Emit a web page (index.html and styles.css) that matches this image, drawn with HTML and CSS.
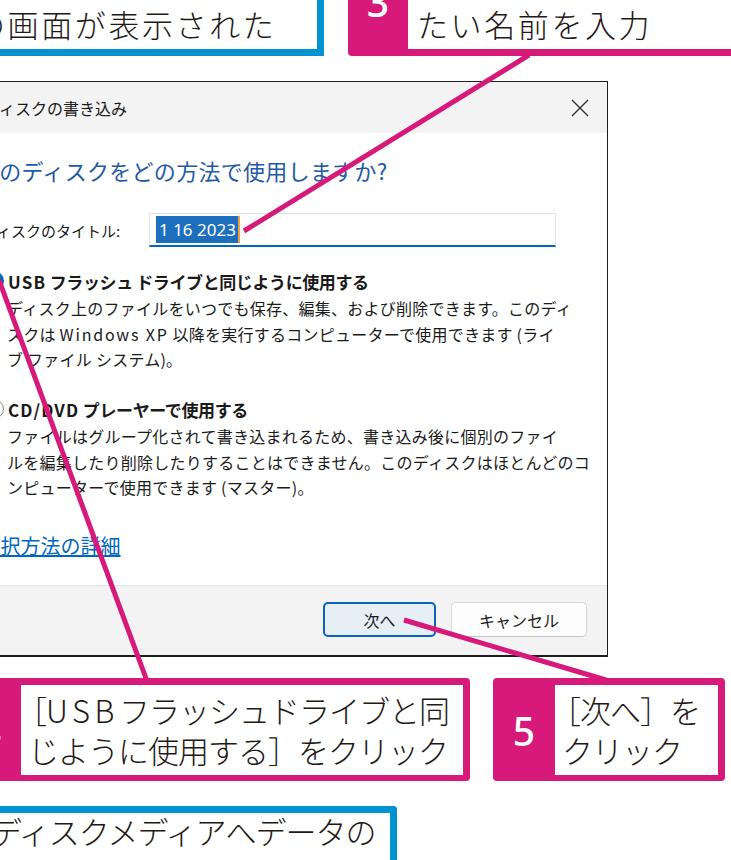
FILE: index.html
```html
<!DOCTYPE html>
<html lang="ja">
<head>
<meta charset="utf-8">
<title>ディスクの書き込み</title>
<link rel="stylesheet" href="styles.css">
</head>
<body>
<div class="top-row">
  <div class="note note-blue top-blue"><p>の画面が表示された</p></div>
  <div class="note callout top-pink">
    <div class="badge badge-top"><span class="num">3</span></div>
    <div class="callout-body top-body"><p>たい名前を入力</p></div>
  </div>
</div>

<div class="frame">
  <div class="window">
    <div class="titlebar">
      <span class="title">ディスクの書き込み</span>
      <svg class="close" width="18" height="18" viewBox="0 0 18 18"><path d="M1 1 L17 17 M17 1 L1 17" stroke="#2b2b2b" stroke-width="1.3" fill="none"/></svg>
    </div>
    <div class="content">
      <div class="heading">このディスクをどの方法で使用しますか?</div>
      <div class="title-row">
        <span class="label">ディスクのタイトル:</span>
        <div class="input"><span class="sel">1 16 2023</span><span class="caret"></span></div>
      </div>
      <div class="option first">
        <div class="opt-head"><span class="radio"></span><span><span class="lat">USB</span> フラッシュ ドライブと同じように使用する</span></div>
        <div class="opt-desc">ディスク上のファイルをいつでも保存、編集、および削除できます。このディ<br>スクは <span class="lat">Windows XP</span> 以降を実行するコンピューターで使用できます (ライ<br>ブ ファイル システム)。</div>
      </div>
      <div class="option second">
        <div class="opt-head"><span class="radio off"></span><span><span class="lat">CD/DVD</span> プレーヤーで使用する</span></div>
        <div class="opt-desc">ファイルはグループ化されて書き込まれるため、書き込み後に個別のファイ<br>ルを編集したり削除したりすることはできません。このディスクはほとんどのコ<br>ンピューターで使用できます (マスター)。</div>
      </div>
      <a class="link" href="#">選択方法の詳細</a>
    </div>
    <div class="footer">
      <button class="btn btn-next">次へ</button>
      <button class="btn btn-cancel">キャンセル</button>
    </div>
  </div>
</div>

<div class="bottom-row">
  <div class="note callout c4">
    <div class="badge"><span class="num">4</span></div>
    <div class="callout-body"><p><span class="lb">［</span><span class="usb">USB</span>フラッシュドライブと同<br>じように使用する］をクリック</p></div>
  </div>
  <div class="note callout c5">
    <div class="badge"><span class="num">5</span></div>
    <div class="callout-body"><p><span class="lb">［</span>次へ］を<br>クリック</p></div>
  </div>
</div>

<div class="note note-blue bottom-blue"><p>ディスクメディアへデータの</p></div>

<svg class="leaders" width="731" height="860" viewBox="0 0 731 860">
  <g stroke="#d7197a" stroke-width="5" fill="none">
    <line x1="529" y1="55" x2="244" y2="231"/>
    <line x1="-1" y1="280" x2="147" y2="681"/>
    <line x1="404" y1="620" x2="606" y2="680"/>
  </g>
</svg>
</body>
</html>
```

FILE: styles.css
```css
* { box-sizing: border-box; }
html, body { margin: 0; padding: 0; }
body {
  width: 731px;
  height: 860px;
  overflow: hidden;
  position: relative;
  background: #fff;
  font-family: "Noto Sans CJK JP", "Noto Sans", sans-serif;
  color: #1a1a1a;
}

/* ---------- callouts ---------- */
.note {
  font-family: "Noto Sans CJK JP", "Noto Sans", sans-serif;
  font-weight: 300;
  font-size: 31px;
  color: #231815;
}
.note p { margin: 0; white-space: nowrap; }

.top-row { display: flex; height: 56px; }
.top-row > * { flex-shrink: 0; }

.top-blue {
  margin-left: -40px;
  width: 364px;
  height: 56px;
  background: #fff;
  border-right: 7px solid #0093cf;
  border-bottom: 7px solid #0093cf;
  padding: 4px 0 0 14px;
  line-height: 40px;
  letter-spacing: 2.6px;
}

.callout {
  display: flex;
  background: #d7197a;
  border-radius: 4px;
}
.badge {
  flex: 0 0 62px;
  display: flex;
  align-items: center;
  justify-content: center;
}
.num {
  font-family: "Noto Sans", "Noto Sans CJK JP", sans-serif;
  font-weight: 500;
  font-size: 39px;
  line-height: 39px;
  color: #fff;
}
.callout-body {
  flex: 1;
  background: #fff;
  line-height: 40px;
  padding: 5px 0 0 7px;
  letter-spacing: -1px;
}
.lb { margin-left: -12px; }
.usb { letter-spacing: 4.5px; }

.top-pink {
  margin-left: 24px;
  width: 420px;
  height: 56px;
  padding: 0 0 7px 0;
  border-radius: 0 0 0 4px;
}
.badge-top {
  flex: 0 0 60px;
  align-items: flex-start;
}
.badge-top .num { margin-top: -18px; }
.top-body {
  padding: 4px 0 0 9px;
  letter-spacing: 2.6px;
}

/* ---------- dialog ---------- */
.frame {
  margin-top: 25px;
  margin-left: -40px;
  width: 648px;
  height: 576px;
  border: 1px solid #1e1e1e;
  border-bottom-width: 2px;
  background: #fafafa;
}
.window {
  height: 100%;
  display: flex;
  flex-direction: column;
  border-radius: 0 8px 8px 0;
  overflow: hidden;
  background: #fff;
}
.titlebar {
  flex: 0 0 51px;
  background: #f3f3f3;
  display: flex;
  align-items: center;
  justify-content: space-between;
  padding: 0 18px 0 23px;
}
.title { font-size: 16px; color: #1a1a1a; }
.close { display: block; }

.content {
  flex: 1;
  padding: 22px 0 0 16px;
  display: flex;
  flex-direction: column;
  align-items: flex-start;
}
.heading {
  font-size: 22px;
  line-height: 30px;
  letter-spacing: 0.3px;
  color: #1f5aa6;
  white-space: nowrap;
}
.title-row {
  margin-top: 28px;
  display: flex;
  align-items: center;
  height: 34px;
}
.label {
  margin-left: 5px;
  width: 167px;
  font-size: 15px;
  white-space: nowrap;
}
.input {
  width: 407px;
  height: 34px;
  border: 1px solid #e2e2e2;
  border-bottom: 2px solid #0067c0;
  background: #fff;
  display: flex;
  align-items: center;
  padding-left: 6px;
}
.sel {
  display: inline-block;
  width: 82px;
  height: 27px;
  background: #1d6fbd;
  color: #fff;
  font-family: "Noto Sans", sans-serif;
  font-size: 17px;
  line-height: 27px;
  padding-left: 3px;
  white-space: nowrap;
}
.caret {
  display: inline-block;
  width: 2px;
  height: 27px;
  background: #eea14d;
}

.option.first { margin-top: 22px; }
.option.second { margin-top: 24.5px; }
.opt-head {
  display: flex;
  align-items: center;
  height: 24px;
  gap: 4px;
  font-size: 17px;
  font-weight: 700;
  letter-spacing: -0.4px;
  white-space: nowrap;
}
.opt-head .lat { letter-spacing: 1.2px; }
.radio {
  margin-left: 7px;
  width: 20px;
  height: 20px;
  border-radius: 50%;
  background: radial-gradient(circle, #fff 0 4px, #0067c0 4.6px);
}
.radio.off {
  background: #fff;
  border: 1px solid #8a8a8a;
}
.opt-desc {
  margin-top: 3px;
  padding-left: 30px;
  font-size: 16px;
  line-height: 25.5px;
  letter-spacing: 0.25px;
  white-space: nowrap;
}
.opt-desc .lat { letter-spacing: 1.8px; }
.link {
  margin-top: 33.5px;
  margin-left: 3.5px;
  font-size: 20px;
  line-height: 24px;
  color: #0067c0;
  text-decoration: underline;
  white-space: nowrap;
}

.footer {
  flex: 0 0 70px;
  background: #f3f3f3;
  border-top: 1px solid #e5e5e5;
  display: flex;
  justify-content: flex-end;
  align-items: flex-start;
  gap: 15px;
  padding: 16px 20px 0 0;
}
.btn {
  height: 35px;
  font-family: "Noto Sans CJK JP", sans-serif;
  font-size: 16px;
  color: #1a1a1a;
  border-radius: 5px;
  padding: 0;
}
.btn-next {
  width: 113px;
  border: 2px solid #0a62b8;
  background: #e6eef6;
}
.btn-cancel {
  width: 136px;
  border: 1px solid #d6d6d6;
  border-bottom-color: #c4c4c4;
  background: #fdfdfd;
}

/* ---------- bottom callouts ---------- */
.bottom-row {
  display: flex;
  margin-top: 21px;
  height: 103px;
}
.bottom-row > * { flex-shrink: 0; }
.c4 {
  margin-left: -41px;
  width: 511px;
  padding: 7px 7px 6px 0;
}
.c5 {
  margin-left: 23px;
  width: 232px;
  padding: 7px 7px 6px 0;
}

.bottom-blue {
  margin-top: 25px;
  margin-left: -40px;
  width: 437px;
  height: 80px;
  background: #fff;
  border-top: 7px solid #0093cf;
  border-right: 7px solid #0093cf;
  border-radius: 0 4px 0 0;
  padding-left: 31px;
  line-height: 36px;
  letter-spacing: -1px;
}

.leaders {
  position: absolute;
  left: 0;
  top: 0;
  pointer-events: none;
}
```
